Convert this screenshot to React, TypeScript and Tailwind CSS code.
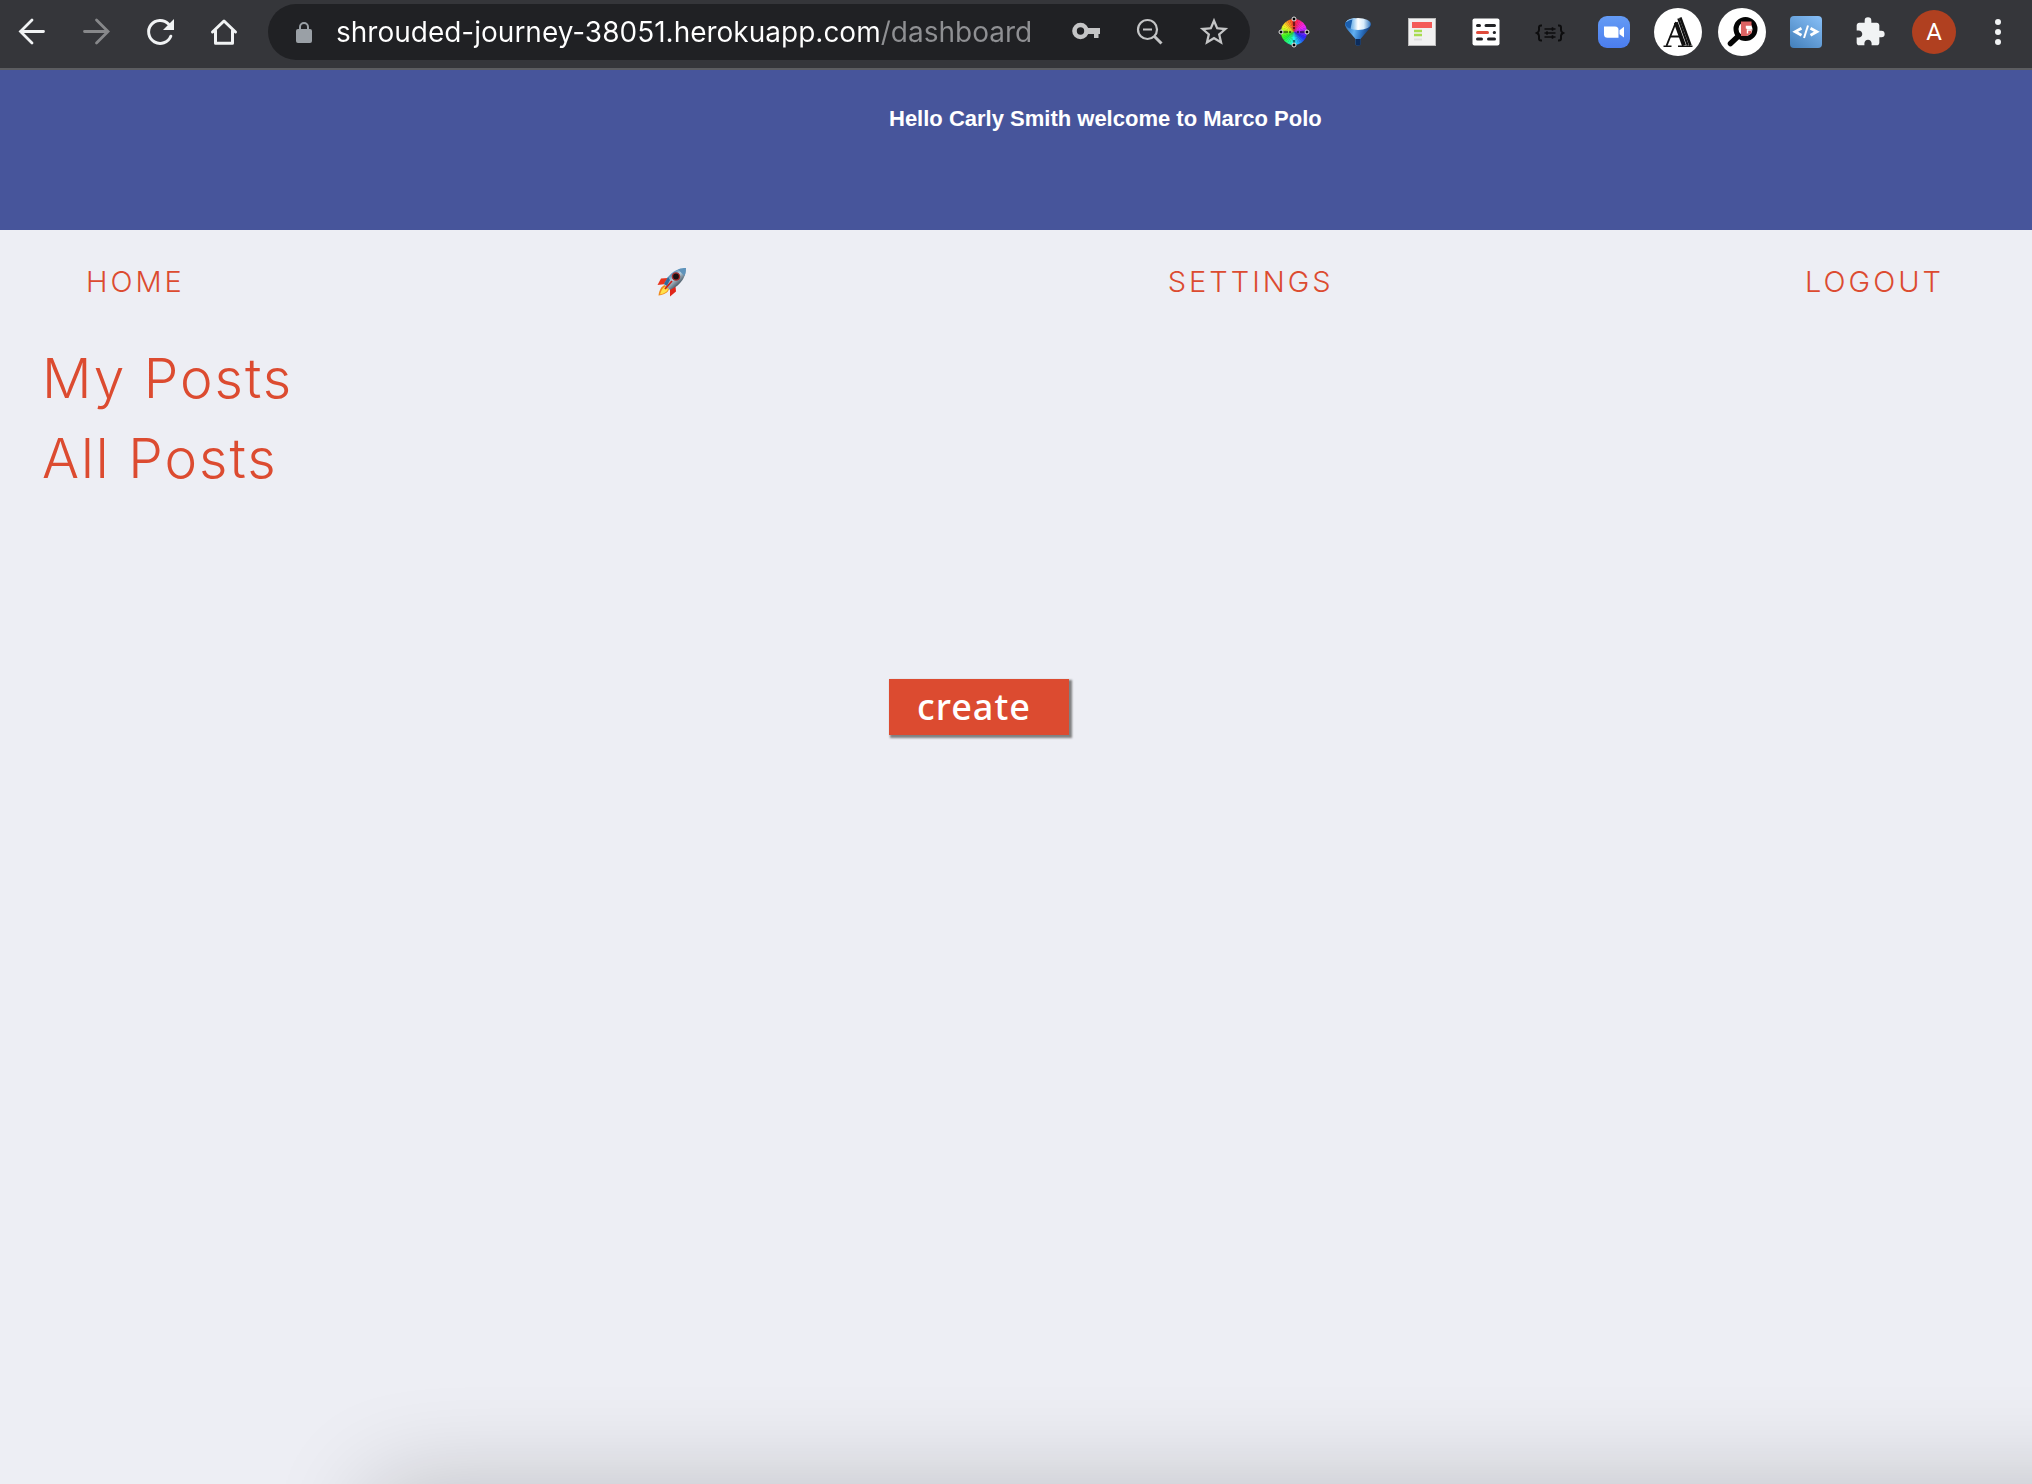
import type { ReactNode } from "react";
import { MdExtension, MdStarBorder } from "react-icons/md";

function BarButton({ label, children }: { label: string; children: ReactNode }) {
  return (
    <button type="button" aria-label={label} className="flex size-16 shrink-0 items-center justify-center">
      {children}
    </button>
  );
}

/* 64-unit canvas shared by all toolbar icons */
function Glyph({ children }: { children: ReactNode }) {
  return (
    <svg viewBox="0 0 64 64" className="size-16" fill="none" aria-hidden="true">
      {children}
    </svg>
  );
}

const wedges = Array.from({ length: 36 }, (_, i) => {
  const a = ((i * 10 - 90) * Math.PI) / 180;
  const b = (((i + 1) * 10 - 89) * Math.PI) / 180;
  const p = (t: number) => `${32 + 13 * Math.cos(t)} ${32 + 13 * Math.sin(t)}`;
  return { d: `M32 32L${p(a)}A13 13 0 0 1 ${p(b)}Z`, fill: `hsl(${355 - i * 10} 95% 56%)` };
});

const pins = [
  [32, 19],
  [45, 32],
  [32, 45],
  [19, 32],
];

function ColorWheel() {
  return (
    <Glyph>
      {wedges.map((w) => (
        <path key={w.d} d={w.d} fill={w.fill} />
      ))}
      <path d="M32 21v8M43 32h-8M32 43v-3M21 32h8" stroke="#000" strokeOpacity=".65" strokeWidth="1.6" strokeDasharray="5 1" />
      {pins.map(([x, y]) => (
        <circle key={`${x}-${y}`} cx={x} cy={y} r="2" fill="#000" stroke="#e8e8e8" strokeWidth="1" />
      ))}
    </Glyph>
  );
}

function Funnel() {
  return (
    <Glyph>
      <defs>
        <linearGradient id="cone" x1="19" y1="24" x2="45" y2="30" gradientUnits="userSpaceOnUse">
          <stop offset="0" stopColor="#2467b4" />
          <stop offset=".4" stopColor="#62b0f2" />
          <stop offset=".65" stopColor="#2f78c8" />
          <stop offset="1" stopColor="#0e3068" />
        </linearGradient>
        <linearGradient id="rim" x1="19" y1="24" x2="45" y2="24" gradientUnits="userSpaceOnUse">
          <stop offset="0" stopColor="#3f8cd8" />
          <stop offset=".3" stopColor="#8cc2ee" />
          <stop offset=".5" stopColor="#ffffff" />
          <stop offset=".72" stopColor="#d8ecfb" />
          <stop offset="1" stopColor="#2a6fbb" />
        </linearGradient>
      </defs>
      <path d="M19 24c0 3 2 5 4 7.500L29.500 39v5.500c1 1.500 4 1.500 5 0V39l6.500-7.500c2-2.500 4-4.500 4-7.500z" fill="url(#cone)" />
      <path d="M29.500 39h5v5.500c-1 1.500-4 1.500-5 0z" fill="#0c2c5c" />
      <ellipse cx="32" cy="24" rx="12.800" ry="6" fill="url(#rim)" />
      <path d="M26.500 18.800L24.500 29c-3-1-5-3-5.300-5 .3-2.500 3.300-4.500 7.300-5.200z" fill="#1b5fae" />
      <path d="M20.500 21.500c2-1.700 5-2.700 9-3" stroke="#9fd0f7" strokeWidth="1" />
    </Glyph>
  );
}

function PageForm() {
  return (
    <Glyph>
      <rect x="18" y="18" width="28" height="28" fill="#b9b9b9" />
      <rect x="19" y="19" width="26" height="26" fill="#f1f1f1" />
      <rect x="22" y="22" width="20" height="6" fill="#f45b58" />
      <path d="M24 31h8M24 35h8" stroke="#a8dc50" strokeWidth="2.400" />
      <path d="M24 39.500h8" stroke="#dedede" strokeWidth="2" />
    </Glyph>
  );
}

function Listing() {
  return (
    <Glyph>
      <rect x="18.500" y="18.500" width="27" height="27" rx="2" fill="#fff" />
      <g strokeWidth="3" strokeLinecap="round">
        <path d="M23.500 25.500h2M32 25.500h8.500M23.500 39h4M34.500 39h6M40.200 32.500h.3" stroke="#222326" />
        <path d="M23.500 32.500h10" stroke="#df4b3b" />
      </g>
    </Glyph>
  );
}

function Braces() {
  return (
    <Glyph>
      <g stroke="#0d0d0e">
        <path d="M24 25.500h-1c-1.500 0-2 .7-2 2v2.500c0 1.800-1 2.500-2 3 1 .5 2 1.200 2 3v2.500c0 1.300.5 2 2 2h1M40 25.500h1c1.500 0 2 .7 2 2v2.500c0 1.800 1 2.500 2 3-1 .5-2 1.200-2 3v2.500c0 1.300-.5 2-2 2h-1" strokeWidth="2" />
        <path d="M26.500 29h11M26.500 33h11M26.500 37h11" strokeWidth="1.600" />
        <path d="M34.500 27.200v3.600M29 31.200v3.600M34.500 35.200v3.600" strokeWidth="1.600" />
      </g>
    </Glyph>
  );
}

function Camera() {
  return (
    <Glyph>
      <defs>
        <linearGradient id="cam" x1="0" y1="16" x2="0" y2="48" gradientUnits="userSpaceOnUse">
          <stop stopColor="#649bf5" />
          <stop offset="1" stopColor="#4b7dee" />
        </linearGradient>
      </defs>
      <rect x="16" y="16" width="32" height="32" rx="9" fill="url(#cam)" />
      <path d="M22 26.500h11a3.500 3.500 0 0 1 3.500 3.500v7.800H25.500A3.500 3.500 0 0 1 22 34.300z" fill="#fff" />
      <path d="M37.500 30.300l4.500-3.500v10.700l-4.500-3.300z" fill="#fff" />
    </Glyph>
  );
}

function Monogram() {
  return (
    <Glyph>
      <circle cx="32" cy="32" r="24" fill="#fff" />
      <path d="M20.500 45.800L30 22" stroke="#111" strokeWidth="1.800" />
      <path d="M29.800 22.500l8.200 23" stroke="#111" strokeWidth="4" />
      <path d="M32.300 18.500l9.500 27" stroke="#111" strokeWidth="2.200" />
      <path d="M34.300 17.500l10.200 28" stroke="#111" strokeWidth="2.600" />
      <path d="M24.500 36.500h10" stroke="#111" strokeWidth="2" />
      <path d="M17.500 46.300h8M32 46.300h14.500" stroke="#111" strokeWidth="1.500" />
    </Glyph>
  );
}

function FontSearch() {
  return (
    <Glyph>
      <circle cx="32" cy="32" r="24" fill="#fff" />
      <circle cx="35.500" cy="29" r="9.500" fill="#fff" stroke="#050505" strokeWidth="5" />
      <path d="M28.500 36l-8 7.500" stroke="#050505" strokeWidth="5.500" strokeLinecap="round" />
      <path d="M31 21.500h10.500v5h-5v2.500h5v4.500l-5 2.500h-5.500z" fill="#dc6262" />
      <path d="M41 26.500h-4.500v2M41 30h-3.500v3.500" stroke="#fff" strokeWidth="1.400" />
    </Glyph>
  );
}

function CodeTile() {
  return (
    <Glyph>
      <defs>
        <linearGradient id="tile" x1="44" y1="16" x2="20" y2="48" gradientUnits="userSpaceOnUse">
          <stop stopColor="#85bdf5" />
          <stop offset="1" stopColor="#4682bd" />
        </linearGradient>
      </defs>
      <rect x="16" y="16" width="32" height="32" rx="4" fill="url(#tile)" />
      <path d="M27.500 28.300l-6.300 3.500 6.300 3.500M36.500 28.300l6.300 3.500-6.300 3.500" stroke="#fff" strokeWidth="2.800" />
      <path d="M34 25.500l-4 12.500" stroke="#fff" strokeWidth="2" />
    </Glyph>
  );
}

function BrowserBar() {
  return (
    <div className="flex h-[70px] w-full shrink-0 items-start border-b-2 border-[#5c5d60] bg-[#35363a] pr-[2px]">
      <BarButton label="Back">
        <Glyph>
          <path d="M43.500 31.500H20.500M32 20L20.500 31.500L32 43" stroke="#f1f3f4" strokeWidth="2.800" strokeLinecap="round" />
        </Glyph>
      </BarButton>
      <BarButton label="Forward">
        <Glyph>
          <path d="M20.500 31.500H43.500M32.500 20L44 31.500L32.500 43" stroke="#87888a" strokeWidth="2.800" strokeLinecap="round" />
        </Glyph>
      </BarButton>
      <BarButton label="Reload">
        <Glyph>
          <path d="M42.800 36.200A11.500 11.500 0 1 1 40.500 24" stroke="#f1f3f4" strokeWidth="3" strokeLinecap="round" />
          <path d="M46 19v11H35z" fill="#f1f3f4" />
        </Glyph>
      </BarButton>
      <BarButton label="Home page">
        <Glyph>
          <path d="M20.500 32L32 21L43.500 32M23.500 30.500V43.200H40.500V30.500" stroke="#f1f3f4" strokeWidth="3" strokeLinecap="round" strokeLinejoin="round" />
        </Glyph>
      </BarButton>
      <div className="mx-3 mt-1 flex h-14 min-w-0 flex-1 items-center rounded-full bg-[#202124] pl-6 pr-1">
        <svg viewBox="0 0 24 24" className="size-6 shrink-0" fill="none" aria-hidden="true">
          <path d="M8 10V7a4 4 0 0 1 8 0v3" stroke="#9aa0a6" strokeWidth="2" />
          <rect x="4" y="9" width="16" height="14" rx="2" fill="#9aa0a6" />
        </svg>
        <input
          type="text"
          aria-label="Address"
          defaultValue="shrouded-journey-38051.herokuapp.com/dashboard"
          className="ml-5 h-full min-w-0 flex-1 bg-[linear-gradient(90deg,#ffffff_544px,#8f9093_544px)] bg-clip-text font-['Inter'] text-[28px] text-transparent outline-none"
        />
        <BarButton label="Saved passwords">
          <Glyph>
            <circle cx="26.500" cy="31" r="6" stroke="#c4c5c6" strokeWidth="4.600" />
            <path d="M33 28h13v6h-1.500v4h-4.500v-4h-7z" fill="#c4c5c6" />
          </Glyph>
        </BarButton>
        <BarButton label="Zoom level">
          <Glyph>
            <circle cx="29.500" cy="29.500" r="9.500" stroke="#c4c5c6" strokeWidth="2.200" />
            <path d="M25 29.500h9" stroke="#c4c5c6" strokeWidth="2" />
            <path d="M36.500 36.500L43.500 43.500" stroke="#c4c5c6" strokeWidth="3" />
          </Glyph>
        </BarButton>
        <BarButton label="Bookmark this page">
          <MdStarBorder className="size-[34px] text-[#c4c5c6]" />
        </BarButton>
      </div>
      <BarButton label="Colour picker"><ColorWheel /></BarButton>
      <BarButton label="Filter"><Funnel /></BarButton>
      <BarButton label="Page ruler"><PageForm /></BarButton>
      <BarButton label="Listing"><Listing /></BarButton>
      <BarButton label="JSON viewer"><Braces /></BarButton>
      <BarButton label="Video meeting"><Camera /></BarButton>
      <BarButton label="Monogram"><Monogram /></BarButton>
      <BarButton label="Font finder"><FontSearch /></BarButton>
      <BarButton label="Code"><CodeTile /></BarButton>
      <BarButton label="Extensions"><MdExtension className="size-8 text-[#f1f3f4]" /></BarButton>
      <BarButton label="Profile">
        <span className="flex size-11 items-center justify-center rounded-full bg-[#b04020] font-['Roboto'] text-2xl text-white">A</span>
      </BarButton>
      <BarButton label="Menu">
        <Glyph>
          <g fill="#f1f3f4">
            <circle cx="32" cy="22" r="3" />
            <circle cx="32" cy="32" r="3" />
            <circle cx="32" cy="42" r="3" />
          </g>
        </Glyph>
      </BarButton>
    </div>
  );
}

function Rocket() {
  return (
    <svg viewBox="0 0 32 32" className="size-8" aria-hidden="true">
      <defs>
        <linearGradient id="hull" x1="14" y1="8" x2="23" y2="18" gradientUnits="userSpaceOnUse">
          <stop stopColor="#4b86b4" />
          <stop offset=".45" stopColor="#b9cfdd" />
          <stop offset="1" stopColor="#4d5d69" />
        </linearGradient>
      </defs>
      <path d="M12 12L5 12.500L1.500 19L10 18z" fill="#e8331c" />
      <path d="M19.500 20l.5 5.500-6 5L14 22z" fill="#e0261a" />
      <path d="M9 19c-4 1-6 6-6.500 10.500C7 29 12 27 13 23z" fill="#f08a1c" />
      <path d="M9.500 20.500c-3 1-4.500 4.500-5.500 8 4-1 7.500-2.500 8-5.500z" fill="#ffe14a" />
      <path d="M30 2c-7 0-13 3-18 9l-4 7 6 6 7-4c6-5 9-11 9-18z" fill="url(#hull)" />
      <path d="M30 2c-3 0-5.500.5-8 1.500l6.500 6.500C29.500 7.500 30 5 30 2z" fill="#5f93bb" />
      <path d="M8 18l4-7 2 3-3 6z" fill="#2f6c9e" />
      <circle cx="20" cy="10.500" r="3.600" fill="#1a1114" stroke="#a52a2a" strokeWidth="1.400" />
      <path d="M9 23l7-8" stroke="#c9211a" strokeWidth="1.800" />
    </svg>
  );
}

export default function App() {
  return (
    <div className="relative flex min-h-screen flex-col overflow-hidden bg-[#edeef4] font-['Inter',sans-serif] text-[#dc4b30]">
      <BrowserBar />
      <header className="grid h-40 grid-cols-[7fr_9fr] bg-[#47559b]">
        <h1 className="col-start-2 pt-8 font-['Liberation_Sans'] text-[22px] leading-[34px] font-bold text-white">
          Hello Carly Smith welcome to Marco Polo
        </h1>
      </header>
      <nav aria-label="Main" className="flex h-[104px] items-center justify-between pr-[88px] pl-[86px] text-[29px] font-light tracking-[3px]">
        <a href="#home">HOME</a>
        <a href="#launch" aria-label="Launch" className="pr-2"><Rocket /></a>
        <a href="#settings">SETTINGS</a>
        <a href="#logout">LOGOUT</a>
      </nav>
      <main className="flex flex-1 flex-col pt-1">
        <section className="flex flex-col items-start pl-[42px] text-[55px] leading-[80px] font-light tracking-[2px]">
          <a href="#my-posts">My Posts</a>
          <a href="#all-posts">All Posts</a>
        </section>
        <div className="grid grid-cols-[7fr_9fr] pt-[181px]">
          <button
            type="button"
            className="col-start-2 h-14 w-[180px] justify-self-start bg-[#dc4b30] pl-7 text-left font-['Noto_Sans'] text-[36px] leading-[54px] font-medium tracking-[1px] text-white shadow-[2px_2px_2px_1px_#808080]"
          >
            create
          </button>
        </div>
      </main>
      {/* shadow cast upward by the window docked below the page */}
      <div className="pointer-events-none absolute top-full right-[-200px] left-[370px] h-60 rounded-2xl shadow-[0_0_100px_rgba(0,0,0,0.2)]" />
    </div>
  );
}
